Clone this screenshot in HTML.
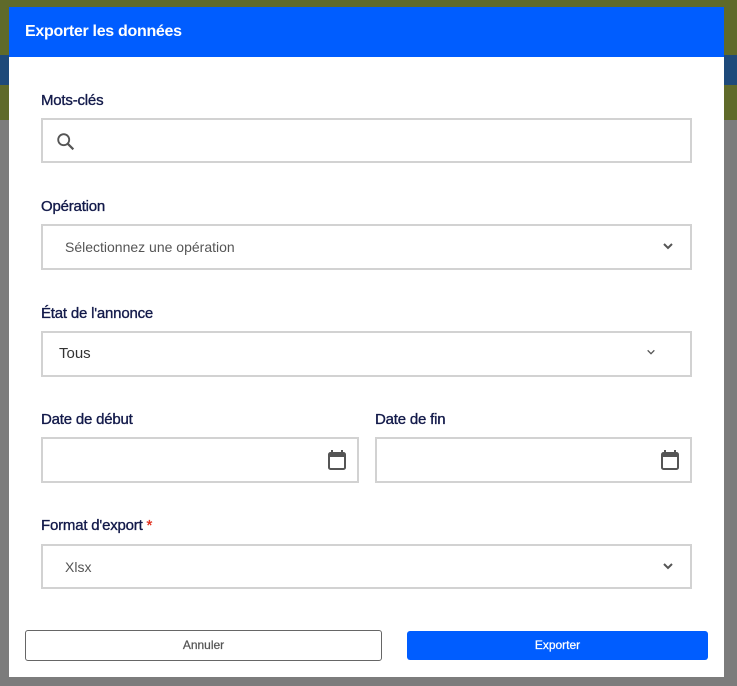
<!DOCTYPE html>
<html><head><meta charset="utf-8"><style>
*{box-sizing:border-box;margin:0;padding:0}
body{width:737px;height:686px;background:#7c7c7c;position:relative;overflow:hidden;font-family:"Liberation Sans",sans-serif}
.bgtop{position:absolute;left:0;top:0;width:737px;height:120px;background:#5f6a2a}
.bgband{position:absolute;left:0;top:55px;width:737px;height:30px;background:#1e4a7a}
.modal{position:absolute;left:9px;top:7px;width:715px;height:670px;background:#fff}
.hdr{height:50px;background:#005dff;color:#fff;font-weight:bold;font-size:16px;line-height:50px;padding-left:16px;letter-spacing:-0.3px}
.lbl{position:absolute;left:32px;font-size:15px;color:#131a4a;letter-spacing:-0.2px;-webkit-text-stroke:0.35px #131a4a}
.box{position:absolute;border:2px solid #d2d2d2;height:46px;background:#fff;font-size:14px;color:#555;padding-left:22px;line-height:42px}
.chev{position:absolute;right:16px;top:14px}
.btn{position:absolute;font-size:12px;text-align:center;border-radius:3px;-webkit-text-stroke:0.25px currentColor}
</style></head><body>
<div class="bgtop"></div><div class="bgband"></div>
<div class="modal">
<div class="hdr">Exporter les données</div>
<div class="lbl" style="top:85px">Mots-clés</div>
<div class="box" style="left:32px;top:111px;width:651px;height:45px">
<svg style="position:absolute;left:12px;top:11px" width="22" height="22" viewBox="0 0 24 24"><circle cx="9.5" cy="9.5" r="6" fill="none" stroke="#555" stroke-width="2"/><path d="M14 14l6 6" stroke="#555" stroke-width="2.4"/></svg></div>
<div class="lbl" style="top:191px">Opération</div>
<div class="box" style="left:32px;top:217px;width:651px;height:46px">Sélectionnez une opération<svg class="chev" width="12" height="12" viewBox="0 0 12 12"><path d="M2 4l4 4 4-4" fill="none" stroke="#555" stroke-width="2"/></svg></div>
<div class="lbl" style="top:298px">État de l'annonce</div>
<div class="box" style="left:32px;top:324px;width:651px;height:46px;padding-left:16px;color:#333;font-size:15px">Tous<svg class="chev" style="right:34px" width="10" height="10" viewBox="0 0 12 12"><path d="M2 4l4 4 4-4" fill="none" stroke="#555" stroke-width="1.6"/></svg></div>
<div class="lbl" style="top:404px">Date de début</div>
<div class="box" style="left:32px;top:430px;width:318px;height:46px"><svg style="position:absolute;right:10px;top:10px" width="20" height="22" viewBox="0 0 20 22"><rect x="2" y="4" width="16" height="16" rx="1.5" fill="none" stroke="#555" stroke-width="2"/><rect x="2" y="4" width="16" height="4" fill="#555"/><path d="M5 1v4M15 1v4" stroke="#555" stroke-width="2"/></svg></div>
<div class="lbl" style="left:366px;top:404px">Date de fin</div>
<div class="box" style="left:366px;top:430px;width:317px;height:46px"><svg style="position:absolute;right:10px;top:10px" width="20" height="22" viewBox="0 0 20 22"><rect x="2" y="4" width="16" height="16" rx="1.5" fill="none" stroke="#555" stroke-width="2"/><rect x="2" y="4" width="16" height="4" fill="#555"/><path d="M5 1v4M15 1v4" stroke="#555" stroke-width="2"/></svg></div>
<div class="lbl" style="top:510px">Format d'export <span style="color:#e0301e;-webkit-text-stroke:0.35px #e0301e">*</span></div>
<div class="box" style="left:32px;top:537px;width:651px;height:45px">Xlsx<svg class="chev" width="12" height="12" viewBox="0 0 12 12"><path d="M2 4l4 4 4-4" fill="none" stroke="#555" stroke-width="2"/></svg></div>
<div class="btn" style="left:16px;top:623px;width:357px;height:31px;border:1px solid #666;line-height:29px;color:#555">Annuler</div>
<div class="btn" style="left:398px;top:624px;width:301px;height:29px;background:#005dff;color:#fff;line-height:29px">Exporter</div>
</div>
</body></html>
